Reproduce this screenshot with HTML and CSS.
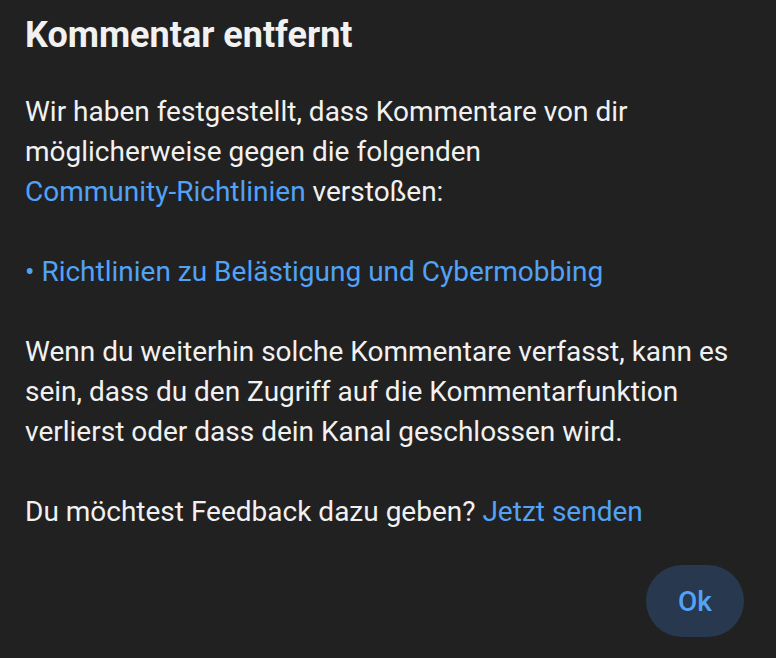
FILE: index.html
```html
<!DOCTYPE html>
<html lang="de">
<head>
<meta charset="utf-8">
<title>Kommentar entfernt</title>
<link rel="stylesheet" href="styles.css">
</head>
<body>
<div class="dialog">
  <h1 class="title">Kommentar entfernt</h1>
  <div class="content">
    <p class="para">Wir haben festgestellt, dass Kommentare von dir<br>möglicherweise gegen die folgenden<br><a class="link" href="#">Community-Richtlinien</a> verstoßen:</p>
    <p class="para"><a class="link" href="#">• Richtlinien zu Belästigung und Cybermobbing</a></p>
    <p class="para">Wenn du weiterhin solche Kommentare verfasst, kann es<br>sein, dass du den Zugriff auf die Kommentarfunktion<br>verlierst oder dass dein Kanal geschlossen wird.</p>
    <p class="para">Du möchtest Feedback dazu geben? <a class="link" href="#">Jetzt senden</a></p>
  </div>
  <div class="actions">
    <button class="ok-btn" type="button">Ok</button>
  </div>
</div>
</body>
</html>
```
FILE: styles.css
```css
html, body {
  margin: 0;
  padding: 0;
  background: #212121;
  height: 100%;
}
body {
  font-family: Roboto, "Noto Sans", sans-serif;
  color: #f1f1f1;
}
.dialog {
  padding: 15px 32px 0 25px;
}
.title {
  margin: 0 0 37px;
  font-size: 36px;
  line-height: 40px;
  font-weight: 700;
  color: #f1f1f1;
}
.content {
  display: flex;
  flex-direction: column;
  gap: 40px;
}
.para {
  margin: 0;
  font-size: 28px;
  line-height: 40px;
  white-space: nowrap;
}
.link {
  color: #52a2f5;
  text-decoration: none;
}
.actions {
  display: flex;
  justify-content: flex-end;
  margin-top: 33px;
}
.ok-btn {
  width: 98px;
  height: 72px;
  border: none;
  border-radius: 36px;
  background: #27384f;
  color: #52a2f5;
  font-family: Roboto, sans-serif;
  font-size: 28px;
  font-weight: 500;
  padding: 0;
}
```
